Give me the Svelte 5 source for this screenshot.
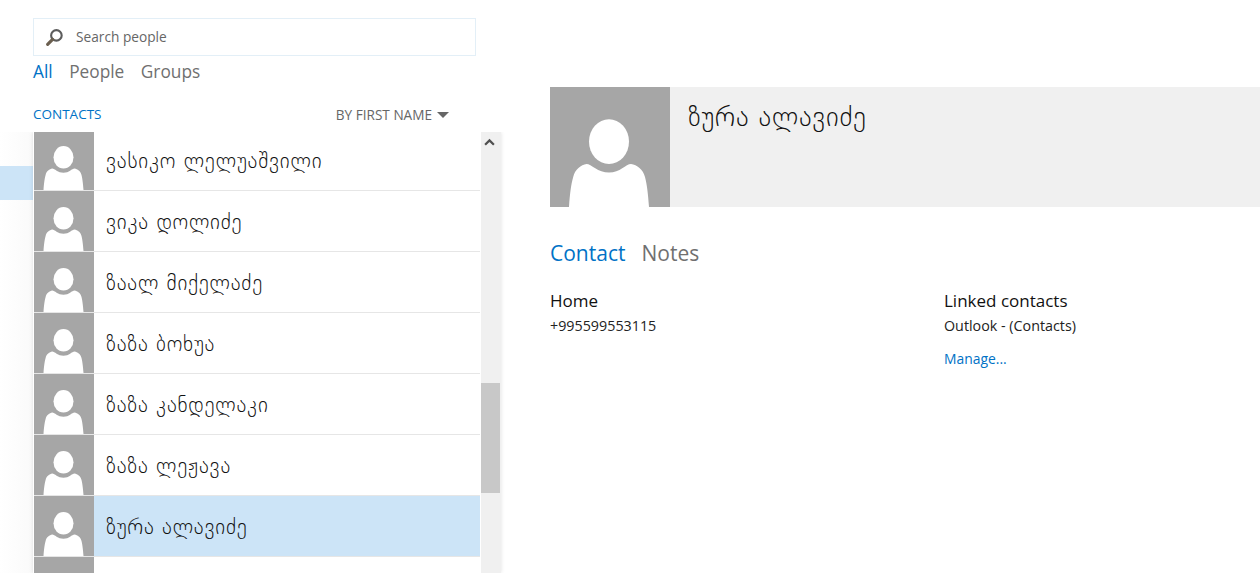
<script lang="ts">
  const people = [
    'ვასიკო ლელუაშვილი',
    'ვიკა დოლიძე',
    'ზაალ მიქელაძე',
    'ზაზა ბოხუა',
    'ზაზა კანდელაკი',
    'ზაზა ლეჟავა',
    'ზურა ალავიძე',
    '',
  ]
  const selected = 'ზურა ალავიძე'
</script>

{#snippet avatar()}
  <svg class="avatar" viewBox="0 0 60 60" aria-hidden="true">
    <rect width="60" height="60" fill="#a6a6a6" />
    <ellipse cx="29.500" cy="27.300" rx="10" ry="11.200" fill="#fff" />
    <path d="M9.500 60C10 53 10.500 49 11.600 45 12.500 41 15.500 39 18.300 38.500 20.500 38.500 24 42.800 29.500 42.800 35 42.800 38 38.500 40.500 38.500 43.500 39 46.500 41 47.500 45 48.500 49 49 53 49.500 60Z" fill="#fff" />
  </svg>
{/snippet}

<div class="page">
  <div class="rail">
    <div class="rail-selected"></div>
  </div>

  <section class="left">
    <div class="search">
      <svg class="search-icon" viewBox="0 0 18 18" aria-hidden="true">
        <circle cx="10.800" cy="7" r="5" fill="none" stroke="#5c5c5c" stroke-width="2" />
        <path d="M7.200 10.800 2.500 15.500" stroke="#6b5f4f" stroke-width="3" stroke-linecap="round" />
      </svg>
      <span>Search people</span>
    </div>
    <nav class="filters">
      <span class="on">All</span>
      <span>People</span>
      <span>Groups</span>
    </nav>
    <div class="list-head">
      <span class="contacts">CONTACTS</span>
      <span class="sort">BY FIRST NAME <i class="caret"></i></span>
    </div>
    <div class="list-box">
      <div class="rows">
        {#each people as name}
          <div class="row" class:selected={name === selected}>
            {@render avatar()}
            <span class="name">{name}</span>
          </div>
        {/each}
      </div>
      <div class="scrollbar">
        <svg class="arrow" viewBox="0 0 10 7" aria-hidden="true">
          <path d="M1 6 5 2l4 4" fill="none" stroke="#505050" stroke-width="2" />
        </svg>
        <div class="thumb"></div>
      </div>
    </div>
  </section>

  <section class="detail">
    <header class="card">
      <div class="card-avatar">{@render avatar()}</div>
      <h1>ზურა ალავიძე</h1>
    </header>
    <nav class="tabs">
      <span class="on">Contact</span>
      <span>Notes</span>
    </nav>
    <div class="cols">
      <div class="col-home">
        <h2>Home</h2>
        <p>+995599553115</p>
      </div>
      <div>
        <h2>Linked contacts</h2>
        <p>Outlook - (Contacts)</p>
        <a href="#manage">Manage...</a>
      </div>
    </div>
  </section>
</div>

<style>
  :global(body) {
    margin: 0;
    background: #fff;
    overflow: hidden;
  }
  .page {
    display: flex;
    height: 573px;
    overflow: hidden;
    font-family: "Open Sans", "DejaVu Sans", sans-serif;
    color: #222;
  }
  .rail {
    width: 33px;
    flex: none;
    padding-top: 166px;
    box-sizing: border-box;
    background: linear-gradient(to right, #fff 0, #fafafa 100%) no-repeat 0 132px;
  }
  .rail-selected {
    height: 34px;
    background: #cce4f7;
  }
  .left {
    width: 469px;
    flex: none;
    padding-top: 18px;
    box-sizing: border-box;
  }
  .search {
    width: 443px;
    height: 38px;
    box-sizing: border-box;
    border: 1px solid #e3eff7;
    display: flex;
    align-items: center;
    padding: 0 0 1px 11px;
    gap: 12px;
    font-size: 13.700px;
    color: #666;
  }
  .search-icon {
    width: 19px;
    height: 19px;
    margin-top: 1px;
  }
  .filters {
    display: flex;
    gap: 16.500px;
    margin-top: 3px;
    font-size: 17.300px;
    line-height: 25px;
    color: #707070;
  }
  .on {
    color: #0072c6;
  }
  .list-head {
    display: flex;
    justify-content: space-between;
    align-items: flex-start;
    width: 416px;
    margin-top: 22px;
    height: 26px;
    font-size: 13.500px;
    line-height: 17px;
  }
  .contacts {
    color: #0072c6;
  }
  .sort {
    color: #666;
    display: flex;
    align-items: center;
    gap: 5px;
    height: 17px;
    font-size: 13.600px;
  }
  .caret {
    width: 0;
    height: 0;
    margin-top: 1px;
    border-left: 6px solid transparent;
    border-right: 6px solid transparent;
    border-top: 6px solid #666;
  }
  .list-box {
    display: flex;
    height: 441px;
    width: 468px;
    overflow: hidden;
    box-shadow: 0 0 4px rgba(0, 0, 0, 0.12);
    clip-path: inset(0 -6px 0 -6px);
    background: #fff;
  }
  .rows {
    width: 447px;
    margin: -2px 1px 0 0;
    flex: none;
    padding-left: 1px;
    box-sizing: border-box;
  }
  .row {
    display: flex;
    align-items: center;
    height: 61px;
    box-sizing: border-box;
    border-bottom: 1px solid #e6e6e6;
  }
  .row.selected {
    background: #cce4f7;
  }
  .avatar {
    display: block;
    width: 60px;
    height: 60px;
    flex: none;
  }
  .name {
    padding: 1px 0 0 12px;
    font-family: "DejaVu Sans", "DejaVu Serif", serif;
    font-weight: 200;
    font-size: 21px;
    letter-spacing: 0.800px;
    color: #111;
  }
  .scrollbar {
    flex: 1;
    position: relative;
    background: #f0f0f0;
  }
  .arrow {
    position: absolute;
    left: 3px;
    top: 6px;
    width: 11px;
    height: 8px;
  }
  .thumb {
    position: absolute;
    left: 0;
    top: 251px;
    width: 19px;
    height: 110px;
    background: #c8c8c8;
  }
  .detail {
    flex: 1;
    padding: 87px 0 0 48px;
  }
  .card {
    display: flex;
    height: 120px;
    background: #f0f0f0;
  }
  .card-avatar {
    width: 120px;
    height: 120px;
    flex: none;
  }
  .card-avatar .avatar {
    width: 120px;
    height: 120px;
  }
  .card h1 {
    margin: 0;
    padding: 13px 0 0 18px;
    font-family: "DejaVu Sans", "DejaVu Serif", serif;
    font-weight: 200;
    font-size: 27px;
    letter-spacing: 0.750px;
    line-height: 34px;
    color: #111;
  }
  .tabs {
    display: flex;
    gap: 16px;
    margin-top: 29px;
    font-size: 21px;
    line-height: 34px;
    color: #707070;
  }
  .cols {
    display: flex;
    margin-top: 18px;
  }
  .col-home {
    width: 394px;
  }
  h2 {
    margin: 0;
    font-size: 17px;
    font-weight: 400;
    line-height: 25px;
    color: #111;
  }
  p {
    margin: 1px 0 0;
    font-size: 14.300px;
    line-height: 24px;
    color: #222;
  }
  a {
    display: block;
    margin-top: 11px;
    font-size: 13.900px;
    line-height: 20px;
    color: #0072c6;
    text-decoration: none;
  }
</style>
